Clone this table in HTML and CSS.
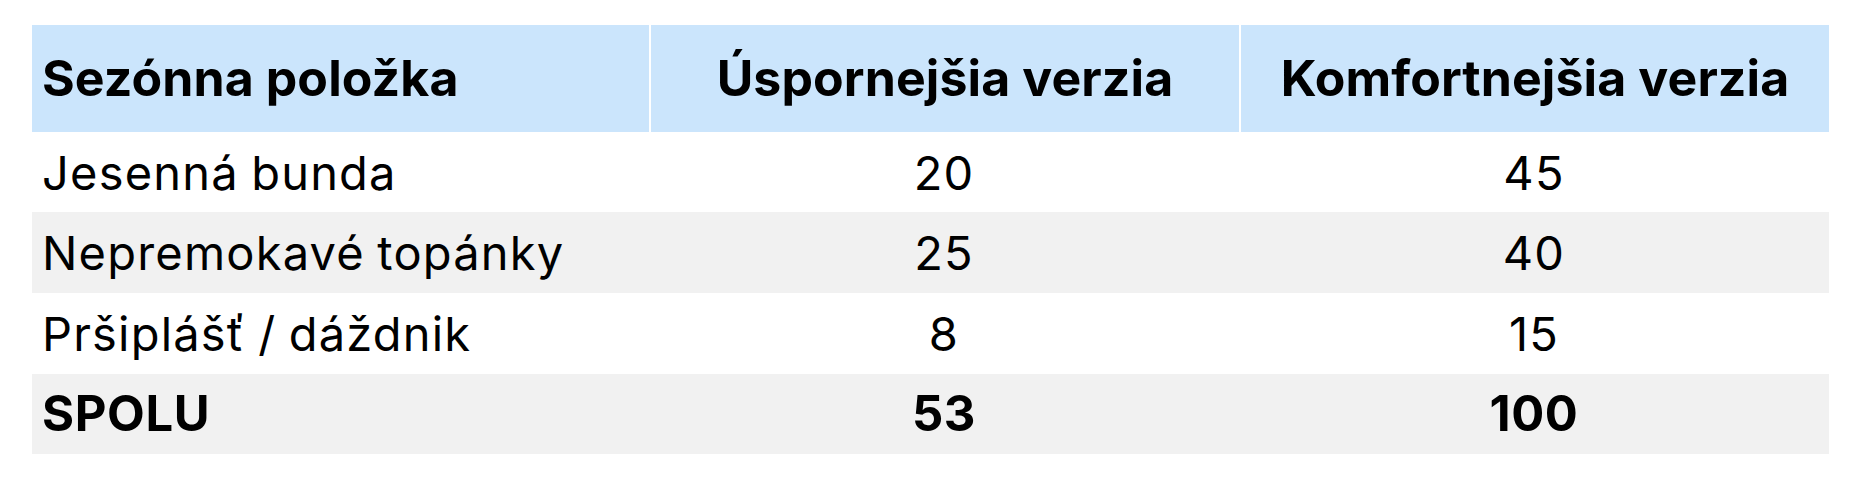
FILE: index.html
```html
<!DOCTYPE html>
<html lang="sk">
<head>
<meta charset="utf-8">
<title>Sezónne položky</title>
<link rel="stylesheet" href="styles.css">
</head>
<body>
<div class="wrap">
<table class="budget">
  <colgroup>
    <col class="c-item">
    <col class="c-num">
    <col class="c-num">
  </colgroup>
  <thead>
    <tr>
      <th class="left">Sezónna položka</th>
      <th>Úspornejšia verzia</th>
      <th>Komfortnejšia verzia</th>
    </tr>
  </thead>
  <tbody>
    <tr>
      <td class="left">Jesenná bunda</td>
      <td>20</td>
      <td>45</td>
    </tr>
    <tr class="alt">
      <td class="left">Nepremokavé topánky</td>
      <td>25</td>
      <td>40</td>
    </tr>
    <tr>
      <td class="left">Pršiplášť / dáždnik</td>
      <td>8</td>
      <td>15</td>
    </tr>
    <tr class="alt total">
      <td class="left">SPOLU</td>
      <td>53</td>
      <td>100</td>
    </tr>
  </tbody>
</table>
</div>
</body>
</html>
```
FILE: styles.css
```css
html, body {
  margin: 0;
  padding: 0;
  background: #ffffff;
}

body {
  font-family: Inter, "Noto Sans", "Liberation Sans", sans-serif;
  color: #000000;
}

.wrap {
  padding: 25px 27px 0 32px;
}

.budget {
  width: 1797px;
  border-collapse: separate;
  border-spacing: 0;
  table-layout: fixed;
}

.c-item { width: 617px; }
.c-num { width: 590px; }

.budget th {
  background: #cbe5fc;
  height: 106.7px;
  padding: 0 10px;
  font-size: 50px;
  font-weight: 700;
  letter-spacing: 0.1px;
  text-align: center;
  vertical-align: middle;
  box-sizing: border-box;
}

.budget th + th {
  border-left: 2px solid #ffffff;
}

.budget td {
  height: 80.67px;
  padding: 0 10px;
  font-size: 47px;
  font-weight: 400;
  letter-spacing: 1.2px;
  word-spacing: -2px;
  text-align: center;
  vertical-align: middle;
  box-sizing: border-box;
}

.budget .left {
  text-align: left;
}

.budget tr.alt td {
  background: #f1f1f1;
}

.budget tr.total td {
  font-weight: 700;
  font-size: 49px;
  letter-spacing: 0.6px;
}
```
